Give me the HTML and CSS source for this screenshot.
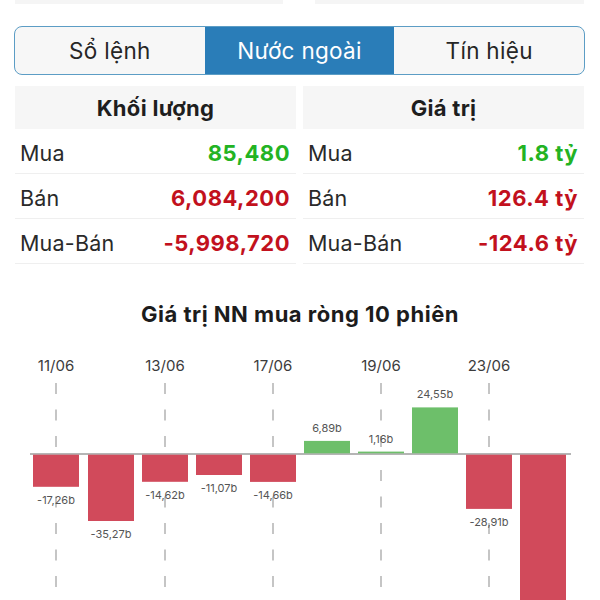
FILE: index.html
```html
<!DOCTYPE html>
<html lang="vi">
<head>
<meta charset="utf-8">
<title>Nước ngoài</title>
<link rel="stylesheet" href="styles.css">
</head>
<body>
<div class="top-strip">
  <div class="strip strip-left"></div>
  <div class="strip strip-right"></div>
</div>

<div class="segmented">
  <div class="seg">Sổ lệnh</div>
  <div class="seg active">Nước ngoài</div>
  <div class="seg">Tín hiệu</div>
</div>

<div class="tables">
  <div class="table">
    <div class="thead">Khối lượng</div>
    <div class="row"><span class="label">Mua</span><span class="val up">85,480</span></div>
    <div class="row"><span class="label">Bán</span><span class="val down">6,084,200</span></div>
    <div class="row"><span class="label">Mua-Bán</span><span class="val down">-5,998,720</span></div>
  </div>
  <div class="table">
    <div class="thead">Giá trị</div>
    <div class="row"><span class="label">Mua</span><span class="val up">1.8 tỷ</span></div>
    <div class="row"><span class="label">Bán</span><span class="val down">126.4 tỷ</span></div>
    <div class="row"><span class="label">Mua-Bán</span><span class="val down">-124.6 tỷ</span></div>
  </div>
</div>

<h2 class="chart-title">Giá trị NN mua ròng 10 phiên</h2>

<svg class="chart" width="600" height="260" viewBox="0 0 600 260">
  <g class="dates">
    <text x="56" y="30">11/06</text>
    <text x="165" y="30">13/06</text>
    <text x="273" y="30">17/06</text>
    <text x="381" y="30">19/06</text>
    <text x="489" y="30">23/06</text>
  </g>
  <g class="grid">
    <path d="M56 42V113M165 42V113M273 42V113M381 42V113M489 42V113"/>
    <path class="low" d="M56 129V260M165 129V260M273 129V260M381 129V260M489 129V260"/>
  </g>
  <line class="zero" x1="30" y1="113" x2="571" y2="113"/>
  <g class="neg">
    <rect x="33" y="113.7" width="46" height="32.1"/>
    <rect x="88" y="113.7" width="46" height="66.3"/>
    <rect x="142" y="113.7" width="46" height="27.1"/>
    <rect x="196" y="113.7" width="46" height="20.3"/>
    <rect x="250" y="113.7" width="46" height="27.2"/>
    <rect x="466" y="113.7" width="46" height="54.2"/>
    <rect x="520" y="113.7" width="46" height="160"/>
  </g>
  <g class="pos">
    <rect x="304" y="99.9" width="46" height="12.4"/>
    <rect x="358" y="110.6" width="46" height="1.7"/>
    <rect x="412" y="66.4" width="46" height="45.9"/>
  </g>
  <g class="vals">
    <text x="56" y="163">-17,26b</text>
    <text x="111" y="197">-35,27b</text>
    <text x="165" y="158">-14,62b</text>
    <text x="219" y="151">-11,07b</text>
    <text x="273" y="158">-14,66b</text>
    <text x="327" y="91">6,89b</text>
    <text x="381" y="102">1,16b</text>
    <text x="435" y="57">24,55b</text>
    <text x="489" y="185">-28,91b</text>
  </g>
</svg>
</body>
</html>
```
FILE: styles.css
```css
* { box-sizing: border-box; }
html, body { margin: 0; padding: 0; background: #fff; }
body {
  width: 600px;
  height: 600px;
  overflow: hidden;
  font-family: Inter, "Noto Sans", "Liberation Sans", sans-serif;
  color: #222;
}
.top-strip {
  display: flex;
  justify-content: space-between;
  padding: 0 16px 0 15px;
  height: 4px;
}
.strip { background: #f5f5f5; height: 4px; }
.strip-left { width: 268px; }
.strip-right { width: 269px; }

.segmented {
  margin: 22px 0 0 14px;
  width: 571px;
  height: 49px;
  border: 1.5px solid #5c9dc5;
  border-radius: 8px;
  overflow: hidden;
  display: grid;
  grid-template-columns: 1fr 1fr 1fr;
  background: #f7f7f7;
}
.seg {
  display: flex;
  align-items: center;
  justify-content: center;
  font-size: 22.5px;
  color: #262626;
  letter-spacing: 0.3px;
}
.seg.active { background: #2a7db8; color: #fff; }

.tables {
  margin: 11px 16px 0 15px;
  display: grid;
  grid-template-columns: 1fr 1fr;
  column-gap: 7px;
}
.thead {
  height: 43px;
  background: #f6f6f6;
  display: flex;
  align-items: center;
  justify-content: center;
  font-size: 22px;
  font-weight: 700;
  color: #1e1e1e;
  letter-spacing: 0.3px;
}
.row {
  height: 45px;
  border-bottom: 1px solid #efefef;
  display: flex;
  align-items: center;
  justify-content: space-between;
  padding: 3px 6px 0 5px;
}
.label { font-size: 21.5px; color: #2a2a2a; letter-spacing: 0.2px; }
.val { font-size: 22px; font-weight: 700; letter-spacing: 0.5px; }
.up { color: #23b323; }
.down { color: #c2111d; }

.chart-title {
  margin: 37px 0 0;
  height: 26px;
  line-height: 26px;
  text-align: center;
  font-size: 22px;
  font-weight: 700;
  color: #1c1c1c;
  letter-spacing: 0.5px;
}
.chart { display: block; margin-top: 14px; }
.dates text {
  font-family: Inter, "Noto Sans", sans-serif;
  font-size: 15px;
  fill: #3c3c3c;
  text-anchor: middle;
}
.grid path {
  fill: none;
  stroke: #b3b3b3;
  stroke-width: 1.5;
  stroke-dasharray: 11 15.5;
}
.zero { stroke: #9c9c9c; stroke-width: 1.5; }
.neg rect { fill: #d14a5b; }
.pos rect { fill: #6dbf6a; }
.vals text {
  font-family: Inter, "Noto Sans", sans-serif;
  font-size: 11px;
  fill: #555;
  text-anchor: middle;
}
```
